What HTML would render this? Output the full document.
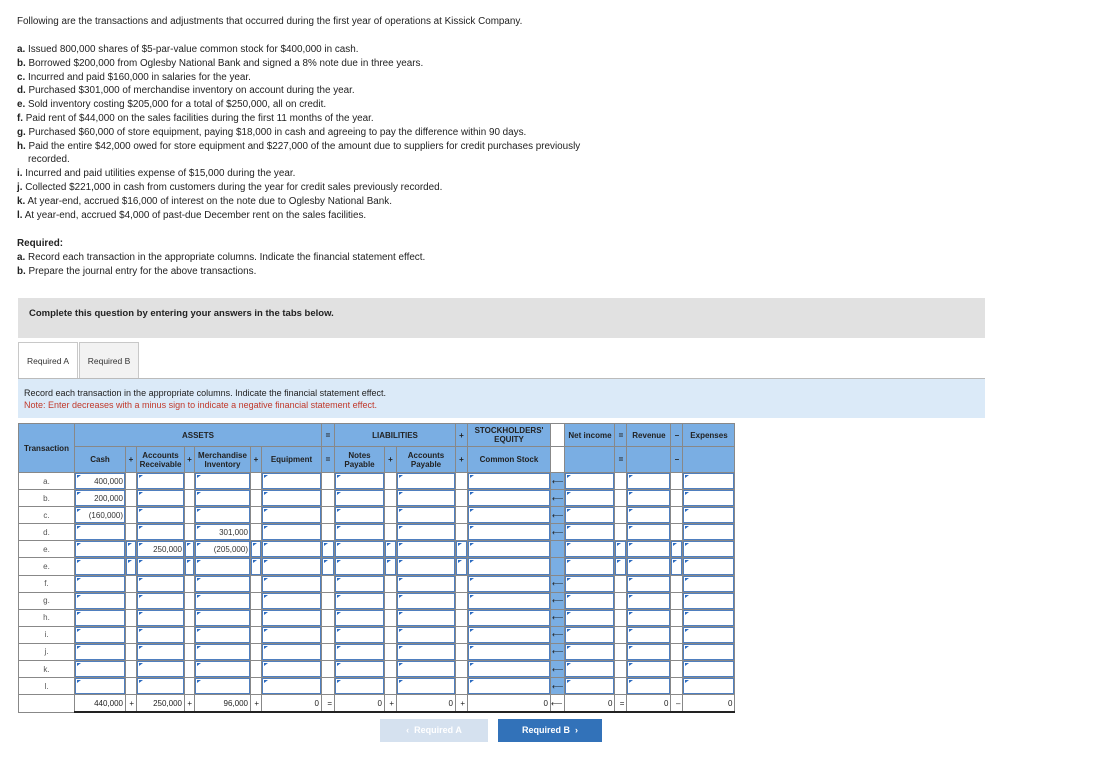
<!DOCTYPE html>
<html><head><meta charset="utf-8"><style>
body{margin:0;background:#fff;font-family:"Liberation Sans",sans-serif;color:#222;width:1095px;height:758px;position:relative;overflow:hidden}
.t{position:absolute;left:17px;font-size:9.9px;line-height:13.8px;white-space:nowrap}
.gray{position:absolute;left:18px;top:298px;width:967px;height:40px;background:#e1e1e1}
.gray span{position:absolute;left:11px;top:10px;font-size:9.5px;font-weight:bold;color:#222}
.tab{position:absolute;top:342px;height:36px;border:1px solid #c8c8c8;border-bottom:none;font-size:8.5px;line-height:36px;text-align:center;color:#333}
.blue{position:absolute;left:18px;top:378px;width:967px;height:40px;background:#dbeaf8;border-top:1px solid #bbb;box-sizing:border-box}
.blue div{position:absolute;left:6px;font-size:9px}
table{position:absolute;left:18px;top:423px;border-collapse:collapse;table-layout:fixed;font-size:8px}
td{border:1px solid #888;padding:0;height:16.1px;line-height:9px;text-align:center;overflow:hidden;white-space:nowrap}
.h td{background:#7aaee3;color:#222;font-weight:bold;font-size:8px;line-height:9px}
td.i{background:#fff;box-shadow:inset 0 0 0 1px #4f7fbf;text-align:right;padding-right:2px;position:relative;color:#333}
td.i:before{content:"";position:absolute;left:2px;top:2px;border-left:4px solid #2a6ac0;border-bottom:3px solid transparent}
td.s{background:#fff}
td.b{background:#7aaee3;font-size:8px}
td.l{background:#fff;color:#555}
.tot td{background:#fff;text-align:right;padding-right:2px;border-bottom:2px solid #222}
.btn{position:absolute;top:719px;height:23px;font-size:9px;font-weight:bold;color:#fff;line-height:23px;text-align:center}
</style></head><body>
<div class="t" style="top:15px">Following are the transactions and adjustments that occurred during the first year of operations at Kissick Company.</div>
<div class="t" style="top:43px"><b>a.</b> Issued 800,000 shares of $5-par-value common stock for $400,000 in cash.<br>
<b>b.</b> Borrowed $200,000 from Oglesby National Bank and signed a 8% note due in three years.<br>
<b>c.</b> Incurred and paid $160,000 in salaries for the year.<br>
<b>d.</b> Purchased $301,000 of merchandise inventory on account during the year.<br>
<b>e.</b> Sold inventory costing $205,000 for a total of $250,000, all on credit.<br>
<b>f.</b> Paid rent of $44,000 on the sales facilities during the first 11 months of the year.<br>
<b>g.</b> Purchased $60,000 of store equipment, paying $18,000 in cash and agreeing to pay the difference within 90 days.<br>
<b>h.</b> Paid the entire $42,000 owed for store equipment and $227,000 of the amount due to suppliers for credit purchases previously<br>
&nbsp;&nbsp;&nbsp;&nbsp;recorded.<br>
<b>i.</b> Incurred and paid utilities expense of $15,000 during the year.<br>
<b>j.</b> Collected $221,000 in cash from customers during the year for credit sales previously recorded.<br>
<b>k.</b> At year-end, accrued $16,000 of interest on the note due to Oglesby National Bank.<br>
<b>l.</b> At year-end, accrued $4,000 of past-due December rent on the sales facilities.</div>
<div class="t" style="top:237px"><b>Required:</b><br><b>a.</b> Record each transaction in the appropriate columns. Indicate the financial statement effect.<br><b>b.</b> Prepare the journal entry for the above transactions.</div>
<div class="gray"><span>Complete this question by entering your answers in the tabs below.</span></div>
<div class="tab" style="left:18px;width:58px;background:#fff;height:37px">Required A</div>
<div class="tab" style="left:79px;width:58px;background:#f2f2f2">Required B</div>
<div class="blue"><div style="top:9px;color:#222">Record each transaction in the appropriate columns. Indicate the financial statement effect.</div><div style="top:21px;color:#c0392b">Note: Enter decreases with a minus sign to indicate a negative financial statement effect.</div></div>
<table>
<colgroup><col style="width:56px"><col style="width:51px"><col style="width:11px"><col style="width:48px"><col style="width:10px"><col style="width:56px"><col style="width:11px"><col style="width:60px"><col style="width:13px"><col style="width:50px"><col style="width:12px"><col style="width:59px"><col style="width:12px"><col style="width:83px"><col style="width:9px"><col style="width:50px"><col style="width:12px"><col style="width:44px"><col style="width:12px"><col style="width:52px"></colgroup>
<tr class="h" style="height:23px"><td rowspan="2">Transaction</td><td colspan="7">ASSETS</td><td>=</td><td colspan="3">LIABILITIES</td><td>+</td><td>STOCKHOLDERS'<br>EQUITY</td><td style="background:#fff"></td><td>Net income</td><td>=</td><td>Revenue</td><td>–</td><td>Expenses</td></tr>
<tr class="h" style="height:26px"><td>Cash</td><td>+</td><td>Accounts<br>Receivable</td><td>+</td><td>Merchandise<br>Inventory</td><td>+</td><td>Equipment</td><td>=</td><td>Notes<br>Payable</td><td>+</td><td>Accounts<br>Payable</td><td>+</td><td>Common Stock</td><td style="background:#fff"></td><td></td><td>=</td><td></td><td>–</td><td></td></tr>
<tr><td class="l">a.</td><td class="i">400,000</td><td class="s"></td><td class="i"></td><td class="s"></td><td class="i"></td><td class="s"></td><td class="i"></td><td class="s"></td><td class="i"></td><td class="s"></td><td class="i"></td><td class="s"></td><td class="i"></td><td class="b">⟵</td><td class="i"></td><td class="s"></td><td class="i"></td><td class="s"></td><td class="i"></td></tr>
<tr><td class="l">b.</td><td class="i">200,000</td><td class="s"></td><td class="i"></td><td class="s"></td><td class="i"></td><td class="s"></td><td class="i"></td><td class="s"></td><td class="i"></td><td class="s"></td><td class="i"></td><td class="s"></td><td class="i"></td><td class="b">⟵</td><td class="i"></td><td class="s"></td><td class="i"></td><td class="s"></td><td class="i"></td></tr>
<tr><td class="l">c.</td><td class="i">(160,000)</td><td class="s"></td><td class="i"></td><td class="s"></td><td class="i"></td><td class="s"></td><td class="i"></td><td class="s"></td><td class="i"></td><td class="s"></td><td class="i"></td><td class="s"></td><td class="i"></td><td class="b">⟵</td><td class="i"></td><td class="s"></td><td class="i"></td><td class="s"></td><td class="i"></td></tr>
<tr><td class="l">d.</td><td class="i"></td><td class="s"></td><td class="i"></td><td class="s"></td><td class="i">301,000</td><td class="s"></td><td class="i"></td><td class="s"></td><td class="i"></td><td class="s"></td><td class="i"></td><td class="s"></td><td class="i"></td><td class="b">⟵</td><td class="i"></td><td class="s"></td><td class="i"></td><td class="s"></td><td class="i"></td></tr>
<tr><td class="l">e.</td><td class="i"></td><td class="i"></td><td class="i">250,000</td><td class="i"></td><td class="i">(205,000)</td><td class="i"></td><td class="i"></td><td class="i"></td><td class="i"></td><td class="i"></td><td class="i"></td><td class="i"></td><td class="i"></td><td class="b"></td><td class="i"></td><td class="i"></td><td class="i"></td><td class="i"></td><td class="i"></td></tr>
<tr><td class="l">e.</td><td class="i"></td><td class="i"></td><td class="i"></td><td class="i"></td><td class="i"></td><td class="i"></td><td class="i"></td><td class="i"></td><td class="i"></td><td class="i"></td><td class="i"></td><td class="i"></td><td class="i"></td><td class="b"></td><td class="i"></td><td class="i"></td><td class="i"></td><td class="i"></td><td class="i"></td></tr>
<tr><td class="l">f.</td><td class="i"></td><td class="s"></td><td class="i"></td><td class="s"></td><td class="i"></td><td class="s"></td><td class="i"></td><td class="s"></td><td class="i"></td><td class="s"></td><td class="i"></td><td class="s"></td><td class="i"></td><td class="b">⟵</td><td class="i"></td><td class="s"></td><td class="i"></td><td class="s"></td><td class="i"></td></tr>
<tr><td class="l">g.</td><td class="i"></td><td class="s"></td><td class="i"></td><td class="s"></td><td class="i"></td><td class="s"></td><td class="i"></td><td class="s"></td><td class="i"></td><td class="s"></td><td class="i"></td><td class="s"></td><td class="i"></td><td class="b">⟵</td><td class="i"></td><td class="s"></td><td class="i"></td><td class="s"></td><td class="i"></td></tr>
<tr><td class="l">h.</td><td class="i"></td><td class="s"></td><td class="i"></td><td class="s"></td><td class="i"></td><td class="s"></td><td class="i"></td><td class="s"></td><td class="i"></td><td class="s"></td><td class="i"></td><td class="s"></td><td class="i"></td><td class="b">⟵</td><td class="i"></td><td class="s"></td><td class="i"></td><td class="s"></td><td class="i"></td></tr>
<tr><td class="l">i.</td><td class="i"></td><td class="s"></td><td class="i"></td><td class="s"></td><td class="i"></td><td class="s"></td><td class="i"></td><td class="s"></td><td class="i"></td><td class="s"></td><td class="i"></td><td class="s"></td><td class="i"></td><td class="b">⟵</td><td class="i"></td><td class="s"></td><td class="i"></td><td class="s"></td><td class="i"></td></tr>
<tr><td class="l">j.</td><td class="i"></td><td class="s"></td><td class="i"></td><td class="s"></td><td class="i"></td><td class="s"></td><td class="i"></td><td class="s"></td><td class="i"></td><td class="s"></td><td class="i"></td><td class="s"></td><td class="i"></td><td class="b">⟵</td><td class="i"></td><td class="s"></td><td class="i"></td><td class="s"></td><td class="i"></td></tr>
<tr><td class="l">k.</td><td class="i"></td><td class="s"></td><td class="i"></td><td class="s"></td><td class="i"></td><td class="s"></td><td class="i"></td><td class="s"></td><td class="i"></td><td class="s"></td><td class="i"></td><td class="s"></td><td class="i"></td><td class="b">⟵</td><td class="i"></td><td class="s"></td><td class="i"></td><td class="s"></td><td class="i"></td></tr>
<tr><td class="l">l.</td><td class="i"></td><td class="s"></td><td class="i"></td><td class="s"></td><td class="i"></td><td class="s"></td><td class="i"></td><td class="s"></td><td class="i"></td><td class="s"></td><td class="i"></td><td class="s"></td><td class="i"></td><td class="b">⟵</td><td class="i"></td><td class="s"></td><td class="i"></td><td class="s"></td><td class="i"></td></tr>
<tr class="tot"><td style="border-bottom:1px solid #888"></td><td>440,000</td><td>+</td><td>250,000</td><td>+</td><td>96,000</td><td>+</td><td>0</td><td>=</td><td>0</td><td>+</td><td>0</td><td>+</td><td>0</td><td class="b">⟵</td><td>0</td><td>=</td><td>0</td><td>–</td><td>0</td></tr>
</table>
<div class="btn" style="left:380px;width:108px;background:#d5e1ef">‹&nbsp;&nbsp;Required A</div>
<div class="btn" style="left:498px;width:104px;background:#3272b9">Required B&nbsp;&nbsp;›</div>
</body></html>
